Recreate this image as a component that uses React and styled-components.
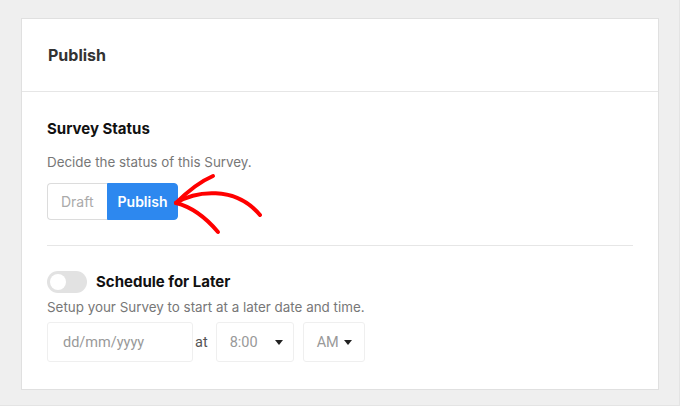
import styled, { createGlobalStyle } from "styled-components"

const GlobalStyle = createGlobalStyle`
    html, body {
        margin: 0;
        padding: 0;
        background: #efefef;
    }
    body {
        font-family: Inter, "Liberation Sans", sans-serif;
        -webkit-font-smoothing: antialiased;
    }
`

const Page = styled.div`
    width: 680px;
    height: 406px;
    box-sizing: border-box;
    padding: 18px 21px 0 21px;
    border: 1px solid #e4e4e4;
    border-top: none;
    border-left: none;
`

const Card = styled.div`
    width: 638px;
    height: 372px;
    box-sizing: border-box;
    background: #fff;
    border: 1px solid #e0e0e0;
`

const Header = styled.div`
    height: 72px;
    display: flex;
    align-items: center;
    padding-left: 26px;
    border-bottom: 1px solid #e6e6e6;
    font-size: 16px;
    font-weight: 700;
    color: #333;
`

const Body = styled.div`
    padding: 28px 25px 0 25px;
`

const Title = styled.div`
    font-size: 15px;
    line-height: 18px;
    font-weight: 700;
    color: #111;
`

const Hint = styled.div`
    font-size: 13.4px;
    line-height: 20px;
    color: #777;
    margin-top: ${p => p.$gap}px;
`

const Segment = styled.div`
    display: flex;
    margin-top: 11px;
    position: relative;
`

const SegButton = styled.button`
    height: 37px;
    box-sizing: border-box;
    padding: 0 ${p => p.$pad}px;
    font-family: inherit;
    font-size: 14px;
    cursor: pointer;
    border: 1px solid ${p => p.$active ? "#2d88ef" : "#dcdcdc"};
    background: ${p => p.$active ? "#2d88ef" : "#fff"};
    color: ${p => p.$active ? "#fff" : "#aaa"};
    font-weight: ${p => p.$active ? 600 : 400};
    border-radius: ${p => p.$first ? "4px 0 0 4px" : "0 4px 4px 0"};
    ${p => p.$first ? "border-right: none;" : ""}
`

// hand drawn arrow pointing at the Publish button
const Arrow = styled.svg`
    position: absolute;
    left: 0;
    top: 0;
    overflow: visible;
    pointer-events: none;
`

const Divider = styled.div`
    height: 1px;
    background: #e6e6e6;
    margin: 25px 0 25px 0;
`

const ToggleRow = styled.div`
    display: flex;
    align-items: center;
    gap: 9px;
    height: 22px;
`

const Switch = styled.div`
    width: 40px;
    height: 22px;
    border-radius: 11px;
    background: #e2e2e2;
    display: flex;
    align-items: center;
    padding-left: 3px;
    box-sizing: border-box;
    &::before {
        content: "";
        width: 16px;
        height: 16px;
        border-radius: 50%;
        background: #fff;
    }
`

const Fields = styled.div`
    display: flex;
    align-items: center;
    margin-top: 5px;
    font-family: Roboto, "Liberation Sans", sans-serif;
`

const Field = styled.div`
    width: ${p => p.$w}px;
    height: 40px;
    box-sizing: border-box;
    border: 1px solid #efefef;
    border-radius: 3px;
    display: flex;
    align-items: center;
    padding-left: ${p => p.$pad}px;
    gap: ${p => p.$gap || 0}px;
    font-size: 14.5px;
    color: #999;
    margin-right: ${p => p.$mr || 0}px;
`

const At = styled.span`
    font-size: 14.5px;
    color: #555;
    margin: 0 8px 0 2px;
`

const Caret = styled.span`
    width: 0;
    height: 0;
    border-left: 4px solid transparent;
    border-right: 4px solid transparent;
    border-top: 5px solid #222;
`

const App = () => {
    return(
        <Page>
            <GlobalStyle />
            <Card>
                <Header>Publish</Header>
                <Body>
                    <Title>Survey Status</Title>
                    <Hint $gap={14}>Decide the status of this Survey.</Hint>
                    <Segment>
                        <SegButton $first $pad={13}>Draft</SegButton>
                        <SegButton $active $pad={10}>Publish</SegButton>
                        <Arrow width="220" height="40" viewBox="0 0 220 40">
                            <path d="M129,20 C148,8 188,2 213,32" fill="none" stroke="#f00" strokeWidth="4" strokeLinecap="round" />
                            <path d="M129,20 C140,9 152,-1 166,-7" fill="none" stroke="#f00" strokeWidth="4" strokeLinecap="round" />
                            <path d="M129,20 C145,24 160,36 171,49" fill="none" stroke="#f00" strokeWidth="4" strokeLinecap="round" />
                        </Arrow>
                    </Segment>
                    <Divider />
                    <ToggleRow>
                        <Switch />
                        <Title>Schedule for Later</Title>
                    </ToggleRow>
                    <Hint $gap={4}>Setup your Survey to start at a later date and time.</Hint>
                    <Fields>
                        <Field $w={146} $pad={15}>dd/mm/yyyy</Field>
                        <At>at</At>
                        <Field $w={78} $pad={13} $gap={17} $mr={9}>8:00 <Caret /></Field>
                        <Field $w={62} $pad={13} $gap={5}>AM <Caret /></Field>
                    </Fields>
                </Body>
            </Card>
        </Page>
    )
}

export default App
